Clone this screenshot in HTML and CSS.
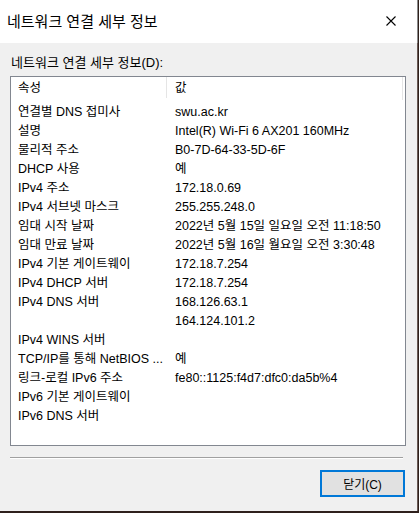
FILE: index.html
```html
<!DOCTYPE html>
<html lang="ko">
<head>
    <meta charset="UTF-8">
    <title>네트워크 연결 세부 정보</title>
    <link rel="stylesheet" href="styles.css">
</head>
<body>
<div class="window">
    <div class="title-bar">
        <span class="title">네트워크 연결 세부 정보</span>
        <svg class="close-icon" width="10" height="10" viewBox="0 0 10 10">
            <path d="M0.5 0.5 L9.5 9.5 M9.5 0.5 L0.5 9.5" stroke="#000" stroke-width="1.1" fill="none"/>
        </svg>
    </div>
    <div class="content">
        <div class="list-label">네트워크 연결 세부 정보(D):</div>
        <div class="list-box">
            <div class="list-header">
                <div class="col-name">속성</div>
                <div class="col-value">값</div>
            </div>
            <div class="row"><div class="col-name">연결별 DNS 접미사</div><div class="col-value">swu.ac.kr</div></div>
            <div class="row"><div class="col-name">설명</div><div class="col-value">Intel(R) Wi-Fi 6 AX201 160MHz</div></div>
            <div class="row"><div class="col-name">물리적 주소</div><div class="col-value">B0-7D-64-33-5D-6F</div></div>
            <div class="row"><div class="col-name">DHCP 사용</div><div class="col-value">예</div></div>
            <div class="row"><div class="col-name">IPv4 주소</div><div class="col-value">172.18.0.69</div></div>
            <div class="row"><div class="col-name">IPv4 서브넷 마스크</div><div class="col-value">255.255.248.0</div></div>
            <div class="row"><div class="col-name">임대 시작 날짜</div><div class="col-value">2022년 5월 15일 일요일 오전 11:18:50</div></div>
            <div class="row"><div class="col-name">임대 만료 날짜</div><div class="col-value">2022년 5월 16일 월요일 오전 3:30:48</div></div>
            <div class="row"><div class="col-name">IPv4 기본 게이트웨이</div><div class="col-value">172.18.7.254</div></div>
            <div class="row"><div class="col-name">IPv4 DHCP 서버</div><div class="col-value">172.18.7.254</div></div>
            <div class="row"><div class="col-name">IPv4 DNS 서버</div><div class="col-value">168.126.63.1</div></div>
            <div class="row"><div class="col-name"></div><div class="col-value">164.124.101.2</div></div>
            <div class="row"><div class="col-name">IPv4 WINS 서버</div><div class="col-value"></div></div>
            <div class="row"><div class="col-name">TCP/IP를 통해 NetBIOS ...</div><div class="col-value">예</div></div>
            <div class="row"><div class="col-name">링크-로컬 IPv6 주소</div><div class="col-value">fe80::1125:f4d7:dfc0:da5b%4</div></div>
            <div class="row"><div class="col-name">IPv6 기본 게이트웨이</div><div class="col-value"></div></div>
            <div class="row"><div class="col-name">IPv6 DNS 서버</div><div class="col-value"></div></div>
        </div>
        <div class="separator"></div>
        <div class="button-row">
            <button class="close-button">닫기(C)</button>
        </div>
    </div>
</div>
</body>
</html>
```

FILE: styles.css
```css
body {
    margin: 0;
    width: 419px;
    height: 513px;
    background-color: #2e201c;
    font-family: "Liberation Sans", "Noto Sans CJK KR", sans-serif;
    font-size: 12px;
    color: #000;
    overflow: hidden;
}

.window {
    width: 418px;
    height: 511px;
    background-color: #f0f0f0;
    display: flex;
    flex-direction: column;
}

.title-bar {
    height: 43px;
    background-color: #fff;
    display: flex;
    align-items: center;
    justify-content: space-between;
    padding: 0 21px 0 7px;
    box-sizing: border-box;
    border-right: 1px solid #8a8a8a;
}

.title {
    font-size: 15px;
    margin-top: -2px;
}

.close-icon {
    margin-top: -1px;
}

.content {
    flex: 1;
    padding: 0 12px 0 10px;
    border-right: 1px solid #6b5a55;
}

.list-label {
    margin-top: 12px;
    padding-left: 1px;
    font-size: 13px;
    line-height: 16px;
    height: 16px;
}

.list-box {
    margin-top: 5px;
    width: 396px;
    height: 370px;
    box-sizing: border-box;
    background-color: #fff;
    border: 1px solid #828790;
    font-size: 12.5px;
}

.list-header {
    display: flex;
    height: 23px;
    padding-top: 2px;
    box-sizing: border-box;
    line-height: 19px;
    margin-right: 2px;
    border-right: 1px solid #e5e5e5;
}

.list-header .col-name {
    border-right: 1px solid #e5e5e5;
    height: 21px;
    margin-top: -2px;
    padding-top: 2px;
}

.row {
    display: flex;
    height: 19px;
    line-height: 19px;
    padding-top: 3px;
    margin-bottom: -3px;
}

.col-name {
    width: 156px;
    padding-left: 7px;
    box-sizing: border-box;
    white-space: nowrap;
    overflow: hidden;
}

.col-value {
    padding-left: 8px;
    white-space: nowrap;
}

.separator {
    margin-top: 11px;
    width: 393px;
    height: 1px;
    background-color: #a0a0a0;
    border-bottom: 1px solid #fff;
}

.button-row {
    display: flex;
    justify-content: flex-end;
    margin-top: 11px;
}

.close-button {
    width: 85px;
    height: 27px;
    background-color: #e1e1e1;
    border: 2px solid #0078d7;
    font-family: "Liberation Sans", "Noto Sans CJK KR", sans-serif;
    font-size: 12px;
    padding: 0;
    margin: 0;
}
```
